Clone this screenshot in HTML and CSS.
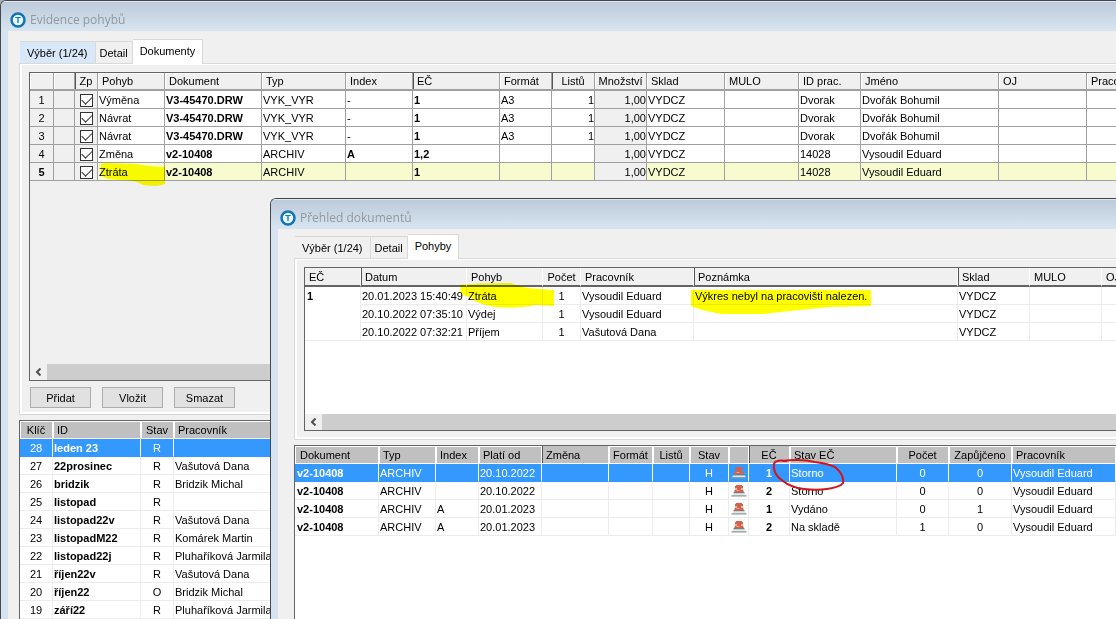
FILE: index.html
```html
<!DOCTYPE html>
<html lang="cs">
<head>
    <meta charset="UTF-8">
    <meta name="viewport" content="width=device-width, initial-scale=1.0">
    <title>Evidence pohybů</title>
    <link rel="stylesheet" href="styles.css">
</head>
<body>

<main class="window">
    <header class="titlebar">
        <svg class="logo" viewBox="0 0 16 16"><circle cx="8" cy="8" r="6.5"/><text x="8" y="11">T</text></svg>
        <span>Evidence pohybů</span>
    </header>
    <div class="content">
        <nav class="tabs">
            <button type="button" class="tab hot">Výběr (1/24)</button>
            <button type="button" class="tab narrow">Detail</button>
            <button type="button" class="tab active">Dokumenty</button>
        </nav>
        <section class="panel">
            <div class="grid moves-grid">
                <table class="moves">
                    <colgroup><col><col><col><col><col><col><col><col><col><col><col><col><col><col><col><col><col></colgroup>
                    <thead>
                        <tr><th></th><th></th><th class="dark center">Zp</th><th>Pohyb</th><th>Dokument</th><th>Typ</th><th>Index</th><th class="dark">EČ</th><th>Formát</th><th class="dark center">Listů</th><th class="center">Množství</th><th>Sklad</th><th>MULO</th><th>ID prac.</th><th>Jméno</th><th>OJ</th><th>Pracovník</th></tr>
                    </thead>
                    <tbody>
                        <tr><td>1</td><td></td><td><input type="checkbox" aria-label="Zp 1" checked></td><td>Výměna</td><td><b>V3-45470.DRW</b></td><td>VYK_VYR</td><td>-</td><td><b>1</b></td><td>A3</td><td>1</td><td>1,00</td><td>VYDCZ</td><td></td><td>Dvorak</td><td>Dvořák Bohumil</td><td></td><td></td></tr>
                        <tr><td>2</td><td></td><td><input type="checkbox" aria-label="Zp 2" checked></td><td>Návrat</td><td><b>V3-45470.DRW</b></td><td>VYK_VYR</td><td>-</td><td><b>1</b></td><td>A3</td><td>1</td><td>1,00</td><td>VYDCZ</td><td></td><td>Dvorak</td><td>Dvořák Bohumil</td><td></td><td></td></tr>
                        <tr><td>3</td><td></td><td><input type="checkbox" aria-label="Zp 3" checked></td><td>Návrat</td><td><b>V3-45470.DRW</b></td><td>VYK_VYR</td><td>-</td><td><b>1</b></td><td>A3</td><td>1</td><td>1,00</td><td>VYDCZ</td><td></td><td>Dvorak</td><td>Dvořák Bohumil</td><td></td><td></td></tr>
                        <tr><td>4</td><td></td><td><input type="checkbox" aria-label="Zp 4" checked></td><td>Změna</td><td><b>v2-10408</b></td><td>ARCHIV</td><td><b>A</b></td><td><b>1,2</b></td><td></td><td></td><td>1,00</td><td>VYDCZ</td><td></td><td>14028</td><td>Vysoudil Eduard</td><td></td><td></td></tr>
                        <tr class="current"><td><b>5</b></td><td></td><td><input type="checkbox" aria-label="Zp 5" checked></td><td class="marked">Ztráta<svg class="marker" viewBox="0 0 67 24" width="67" height="24"><path d="M3 2 Q3 0 8 0 L38 1 Q55 4 67 4 L67 21 Q60 24 45 22 Q38 17 22 17 L10 16 Q3 14 3 9z"/></svg></td><td><b>v2-10408</b></td><td>ARCHIV</td><td></td><td><b>1</b></td><td></td><td></td><td>1,00</td><td>VYDCZ</td><td></td><td>14028</td><td>Vysoudil Eduard</td><td></td><td></td></tr>
                    </tbody>
                </table>
                <div class="scrollbar"><button type="button" aria-label="Posunout vlevo"><svg viewBox="0 0 8 8"><path d="M5.5 .5 2 4 5.5 7.5"/></svg></button></div>
            </div>
            <div class="actions">
                <button type="button">Přidat</button>
                <button type="button">Vložit</button>
                <button type="button">Smazat</button>
            </div>
        </section>
        <div class="grid list">
            <table class="keys">
                <colgroup><col><col><col><col></colgroup>
                <thead>
                    <tr><th class="center">Klíč</th><th>ID</th><th class="center">Stav</th><th>Pracovník</th></tr>
                </thead>
                <tbody>
                    <tr class="selected"><td>28</td><td><b>leden 23</b></td><td>R</td><td></td></tr>
                    <tr><td>27</td><td><b>22prosinec</b></td><td>R</td><td>Vašutová Dana</td></tr>
                    <tr><td>26</td><td><b>bridzik</b></td><td>R</td><td>Bridzik Michal</td></tr>
                    <tr><td>25</td><td><b>listopad</b></td><td>R</td><td></td></tr>
                    <tr><td>24</td><td><b>listopad22v</b></td><td>R</td><td>Vašutová Dana</td></tr>
                    <tr><td>23</td><td><b>listopadM22</b></td><td>R</td><td>Komárek Martin</td></tr>
                    <tr><td>22</td><td><b>listopad22j</b></td><td>R</td><td>Pluhaříková Jarmila</td></tr>
                    <tr><td>21</td><td><b>říjen22v</b></td><td>R</td><td>Vašutová Dana</td></tr>
                    <tr><td>20</td><td><b>říjen22</b></td><td>O</td><td>Bridzik Michal</td></tr>
                    <tr><td>19</td><td><b>září22</b></td><td>R</td><td>Pluhaříková Jarmila</td></tr>
                </tbody>
            </table>
        </div>
    </div>
</main>

<section class="window child">
    <header class="titlebar">
        <svg class="logo" viewBox="0 0 16 16"><circle cx="8" cy="8" r="6.5"/><text x="8" y="11">T</text></svg>
        <span>Přehled dokumentů</span>
    </header>
    <div class="content">
        <nav class="tabs">
            <button type="button" class="tab">Výběr (1/24)</button>
            <button type="button" class="tab narrow">Detail</button>
            <button type="button" class="tab active">Pohyby</button>
        </nav>
        <section class="panel">
            <div class="grid history-grid">
                <table class="history">
                    <colgroup><col><col><col><col><col><col><col><col><col></colgroup>
                    <thead>
                        <tr><th>EČ</th><th class="dark">Datum</th><th>Pohyb</th><th class="center">Počet</th><th>Pracovník</th><th class="dark">Poznámka</th><th class="dark">Sklad</th><th>MULO</th><th>OJ</th></tr>
                    </thead>
                    <tbody>
                        <tr><td rowspan="3" class="group"><b>1</b></td><td>20.01.2023 15:40:49</td><td class="marked">Ztráta<svg class="marker wide" viewBox="0 0 96 25" width="96" height="25"><path d="M1 2 Q18 0 52 0 Q62 5 80 6 L95 7 L95 23 L76 22 Q60 26 36 24 Q18 21 12 15 L2 11z"/></svg></td><td class="center">1</td><td>Vysoudil Eduard</td><td class="marked">Výkres nebyl na pracovišti nalezen.<svg class="marker note" viewBox="0 0 180 25" width="180" height="25"><path d="M0 0 L180 0 L180 16 L140 17 Q105 20 72 24 L30 24 Q8 20 0 16z"/></svg></td><td>VYDCZ</td><td></td><td></td></tr>
                        <tr><td>20.10.2022 07:35:10</td><td>Výdej</td><td class="center">1</td><td>Vysoudil Eduard</td><td></td><td>VYDCZ</td><td></td><td></td></tr>
                        <tr><td>20.10.2022 07:32:21</td><td>Příjem</td><td class="center">1</td><td>Vašutová Dana</td><td></td><td>VYDCZ</td><td></td><td></td></tr>
                    </tbody>
                </table>
                <div class="scrollbar"><button type="button" aria-label="Posunout vlevo"><svg viewBox="0 0 8 8"><path d="M5.5 .5 2 4 5.5 7.5"/></svg></button></div>
            </div>
        </section>

        <!-- razítko -->
        <svg class="defs" width="0" height="0">
            <symbol id="stamp" viewBox="0 0 16 12">
                <path fill="#9a7770" d="M4 1h8v2.500H4z"/>
                <path fill="#dc5f45" d="M5 0h6l.5 2.500h-7zM6 3h4v2H6z"/>
                <path fill="#dc5f45" d="M4 4.500h8l1 3H3z"/>
                <path fill="#e9a294" d="M5.500 5h3v1h-3z"/>
                <path fill="#857a79" d="M2.500 7h11v1.500h-11z"/>
                <path fill="#dfe9e6" d="M2 8.500h12l1 2H1z"/>
                <path fill="#7f9690" d="M.5 10.300h15v1.200H.5z"/>
            </symbol>
        </svg>

        <div class="grid list">
            <table class="stock">
                <colgroup><col><col><col><col><col><col><col><col><col><col><col><col><col><col></colgroup>
                <thead>
                    <tr><th>Dokument</th><th>Typ</th><th>Index</th><th>Platí od</th><th class="dark">Změna</th><th class="center">Formát</th><th class="center">Listů</th><th class="center">Stav</th><th></th><th class="dark center">EČ</th><th>Stav EČ</th><th class="center">Počet</th><th class="center">Zapůjčeno</th><th>Pracovník</th></tr>
                </thead>
                <tbody>
                    <tr class="selected"><td><b>v2-10408</b></td><td>ARCHIV</td><td></td><td>20.10.2022</td><td></td><td></td><td></td><td>H</td><td><svg class="stamp"><use href="#stamp"/></svg></td><td><b>1</b></td><td class="marked">Storno<svg class="circled" viewBox="0 0 76 34" width="76" height="34"><path d="M17 3 C10 2 5 2 4 6 C3 13 7 19 13 23 C19 28 26 30 34 31 C42 32 50 32 57 31 C64 30 71 28 73 25 C74 20 71 14 65 9 C59 6 52 5 45 4 C36 2 27 1 12 3"/></svg></td><td>0</td><td>0</td><td>Vysoudil Eduard</td></tr>
                    <tr><td><b>v2-10408</b></td><td>ARCHIV</td><td></td><td>20.10.2022</td><td></td><td></td><td></td><td>H</td><td><svg class="stamp"><use href="#stamp"/></svg></td><td><b>2</b></td><td>Storno</td><td>0</td><td>0</td><td>Vysoudil Eduard</td></tr>
                    <tr><td><b>v2-10408</b></td><td>ARCHIV</td><td>A</td><td>20.01.2023</td><td></td><td></td><td></td><td>H</td><td><svg class="stamp"><use href="#stamp"/></svg></td><td><b>1</b></td><td>Vydáno</td><td>0</td><td>1</td><td>Vysoudil Eduard</td></tr>
                    <tr><td><b>v2-10408</b></td><td>ARCHIV</td><td>A</td><td>20.01.2023</td><td></td><td></td><td></td><td>H</td><td><svg class="stamp"><use href="#stamp"/></svg></td><td><b>2</b></td><td>Na skladě</td><td>1</td><td>0</td><td>Vysoudil Eduard</td></tr>
                </tbody>
            </table>
        </div>
    </div>
</section>

</body>
</html>
```
FILE: styles.css
```css
* {
    box-sizing: border-box;
}
body {
    margin: 0;
    height: 100vh;
    overflow: hidden;
    position: relative;
    background-color: #a9adb3;
    font-family: "Liberation Sans", Arial, sans-serif;
    font-size: 11px;
    line-height: 16px;
    color: #000;
}
button {
    font: inherit;
    color: inherit;
    padding: 0;
    margin: 0;
}

/* okna */
.window {
    height: 100%;
    display: flex;
    flex-direction: column;
    border-top: 1px solid #45474f;
    border-left: 1px solid #45474f;
    border-top-left-radius: 6px;
    background-color: #d7e3f1;
    overflow: hidden;
}
.child {
    position: absolute;
    left: 270px;
    top: 198px;
    right: 0;
    bottom: 0;
    height: auto;
}
.titlebar {
    flex: none;
    display: flex;
    align-items: center;
    gap: 4px;
    height: 30px;
    padding: 6px 9px 0;
    background: linear-gradient(#bccada, #d8e5f1);
    border-top: 1px solid #dfe6ee;
    font-family: "Open Sans", sans-serif;
    font-size: 12px;
    line-height: 18px;
    color: #92989f;
}
.logo {
    width: 16px;
    height: 16px;
}
.logo circle {
    fill: #e8f8ff;
    stroke: #1273b5;
    stroke-width: 2.5;
}
.logo text {
    font: bold 9px "Liberation Sans", sans-serif;
    text-anchor: middle;
    fill: #1273b5;
}
.content {
    flex: 1;
    display: flex;
    flex-direction: column;
    min-height: 0;
    margin-left: 7px;
    padding: 8px 0 0 11px;
    background-color: #f0f0f0;
}
.child .content {
    padding: 5px 0 0 16px;
}

/* záložky */
.tabs {
    flex: none;
    display: flex;
    align-items: flex-end;
    padding-left: 1px;
}
.tab {
    height: 22px;
    padding: 0 7px;
    border: 1px solid #d9d9d9;
    border-width: 1px 1px 0 0;
    background-color: #f0f0f0;
}
.narrow {
    padding: 0 4px;
}
.hot {
    background-color: #d8e8f8;
}
.active {
    height: 25px;
    margin-bottom: -1px;
    padding-bottom: 3px;
    background-color: #fff;
    position: relative;
}
.panel {
    flex: none;
    border: 1px solid #d9d9d9;
    border-right: 0;
    padding: 8px 0 6px 9px;
    box-shadow: inset 2px 1px #fff, inset 0 -2px #fff;
}
.child .panel {
    padding-bottom: 8px;
}

/* tabulky */
.grid {
    display: flex;
    flex-direction: column;
    border: 1px solid #646464;
    border-right: 0;
    overflow: hidden;
}
.moves-grid {
    min-height: 309px;
}
.history-grid {
    min-height: 164px;
    background-color: #fff;
}
.list {
    flex: 1;
    margin-top: 5px;
    border-bottom: 0;
    background-color: #fff;
}
table {
    table-layout: fixed;
    width: 100%;
    border-spacing: 0;
}
th, td {
    height: 18px;
    padding: 0 1px;
    border: 0 solid #ececec;
    border-width: 0 1px 1px 0;
    text-align: left;
    white-space: nowrap;
}
th {
    padding: 0 0 0 4px;
    font-weight: normal;
    overflow: hidden;
}
.center, .keys td:nth-child(odd):not(:last-child),
.stock td:nth-child(8), .stock td:nth-child(10),
.stock td:nth-child(12), .stock td:nth-child(13) {
    text-align: center;
}
th.center {
    padding: 0;
}
.moves th {
    border-color: #a0a0a0;
    border-bottom-width: 2px;
    box-shadow: inset 1px 1px #fff;
}
.moves td {
    border-color: #a0a0a0;
    background-color: #fff;
}
.moves .current td {
    background-color: #f8fbce;
}
.moves td:nth-child(-n+3), .moves td:nth-child(11),
.moves .current td:nth-child(-n+3), .moves .current td:nth-child(11) {
    background-color: #f0f0f0;
}
.moves td:first-child {
    text-align: center;
}
.moves td:nth-child(10), .moves td:nth-child(11) {
    text-align: right;
    padding: 0;
}
.moves th.dark, .history th.dark, .list th.dark {
    box-shadow: inset 1px 0 #555;
}
.history th {
    height: 19px;
    border-color: #fff #fff #646464;
    border-bottom-width: 2px;
    background-color: #f0f0f0;
}
.history .group {
    vertical-align: top;
    padding: 1px 0 0 2px;
}
.list th {
    background-color: #c0c0c0;
    border-color: #fff;
    box-shadow: inset 1px 1px #fff;
}
.selected td {
    background-color: #3399ff;
    border-color: #3399ff #fff #3399ff #3399ff;
    color: #fff;
}
.stock th:first-child {
    padding-left: 5px;
}
.stock td:first-child {
    padding-left: 2px;
}

/* šířky sloupců */
.moves col:nth-child(1) { width: 24px; }
.moves col:nth-child(2) { width: 21px; }
.moves col:nth-child(3) { width: 23px; }
.moves col:nth-child(4) { width: 67px; }
.moves col:nth-child(5) { width: 97px; }
.moves col:nth-child(6) { width: 84px; }
.moves col:nth-child(7) { width: 67px; }
.moves col:nth-child(8) { width: 87px; }
.moves col:nth-child(9) { width: 52px; }
.moves col:nth-child(10) { width: 43px; }
.moves col:nth-child(11) { width: 52px; }
.moves col:nth-child(12) { width: 78px; }
.moves col:nth-child(13) { width: 74px; }
.moves col:nth-child(14) { width: 62px; }
.moves col:nth-child(15) { width: 138px; }
.moves col:nth-child(16) { width: 88px; }
.moves col:nth-child(17) { width: 80px; }

.keys col:nth-child(1) { width: 33px; }
.keys col:nth-child(2) { width: 88px; }
.keys col:nth-child(3) { width: 33px; }

.history col:nth-child(1) { width: 56px; }
.history col:nth-child(2) { width: 106px; }
.history col:nth-child(3) { width: 76px; }
.history col:nth-child(4) { width: 38px; }
.history col:nth-child(5) { width: 113px; }
.history col:nth-child(6) { width: 264px; }
.history col:nth-child(7) { width: 72px; }
.history col:nth-child(8) { width: 72px; }
.history col:nth-child(9) { width: 80px; }

.stock col:nth-child(1) { width: 84px; }
.stock col:nth-child(2) { width: 57px; }
.stock col:nth-child(3) { width: 43px; }
.stock col:nth-child(4) { width: 63px; }
.stock col:nth-child(5) { width: 67px; }
.stock col:nth-child(6) { width: 44px; }
.stock col:nth-child(7) { width: 37px; }
.stock col:nth-child(8) { width: 39px; }
.stock col:nth-child(9) { width: 20px; }
.stock col:nth-child(10) { width: 41px; }
.stock col:nth-child(11) { width: 107px; }
.stock col:nth-child(12) { width: 52px; }
.stock col:nth-child(13) { width: 63px; }

input[type="checkbox"] {
    appearance: none;
    display: block;
    width: 13px;
    height: 13px;
    margin: 1px auto 0;
    padding: 0 0 0 3px;
    border: 1px solid #333;
    background-color: #fff;
}
input[type="checkbox"]:checked::after {
    content: "";
    display: block;
    width: 5px;
    height: 9px;
    margin-top: -1px;
    border: solid #333;
    border-width: 0 1px 1px 0;
    transform: rotate(45deg);
}
.stamp {
    display: block;
    width: 16px;
    height: 12px;
    margin: 0 auto;
}
.defs {
    position: absolute;
}

/* zvýraznění fixem */
.marked {
    position: relative;
}
.marker, .circled {
    position: absolute;
    pointer-events: none;
}
.marker {
    left: 0;
    top: 0;
    fill: #ff0;
    mix-blend-mode: multiply;
}
.wide {
    left: -8px;
    top: -4px;
}
.note {
    left: -3px;
    top: 3px;
}
.circled {
    left: -20px;
    top: -6px;
    z-index: 1;
    fill: none;
    stroke: #d4141c;
    stroke-width: 2;
}

/* posuvník */
.scrollbar {
    margin-top: auto;
    height: 16px;
    display: flex;
    background-color: #cdcdcd;
}
.scrollbar button {
    width: 17px;
    border: 0;
    background-color: #f0f0f0;
}
.scrollbar svg {
    display: block;
    width: 8px;
    height: 8px;
    margin: 0 auto;
    fill: none;
    stroke: #505050;
    stroke-width: 2;
}
.actions {
    display: flex;
    gap: 11px;
    padding: 6px 0 0 1px;
}
.actions button {
    width: 61px;
    height: 21px;
    border: 1px solid #adadad;
    background-color: #e1e1e1;
}
```
